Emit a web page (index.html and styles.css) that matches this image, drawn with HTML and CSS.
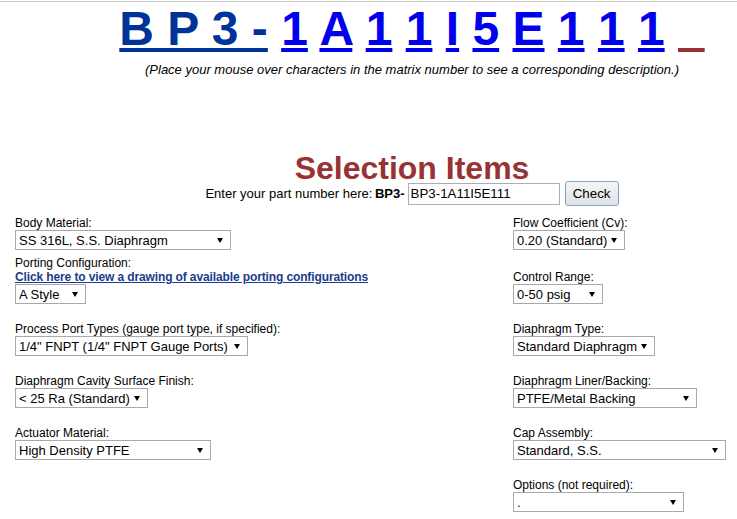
FILE: index.html
```html
<!DOCTYPE html>
<html>

<head>
    <title>
        Selection Items
    </title>

    <link rel="stylesheet" href="styles.css">
</head>

<body>
    <div class="topline"></div>

    <div class="page">
        <div class="head">
            <div class="matrix">
                <a class="prefix" href="#">B P 3 -</a>
                <a href="#">1</a>
                <a href="#">A</a>
                <a href="#">1</a>
                <a href="#">1</a>
                <a href="#">I</a>
                <a href="#">5</a>
                <a href="#">E</a>
                <a href="#">1</a>
                <a href="#">1</a>
                <a href="#">1</a>
                <span class="blank">&nbsp;&nbsp;</span>
            </div>

            <p class="hint">(Place your mouse over characters in the matrix number to see a corresponding description.)</p>

            <h1 class="title">Selection Items</h1>

            <form class="partline">
                <span>Enter your part number here: <b>BP3-</b></span>
                <input type="text" class="partno" value="BP3-1A11I5E111">
                <button type="button" class="check">Check</button>
            </form>
        </div>

        <div class="options">
            <div class="field">
                <label>Body Material:</label>
                <span class="pick"><select class="w-body"><option>SS 316L, S.S. Diaphragm</option></select></span>
            </div>
            <div class="field">
                <label>Flow Coefficient (Cv):</label>
                <span class="pick"><select class="w-flow"><option>0.20 (Standard)</option></select></span>
            </div>

            <div class="field">
                <label>Porting Configuration:</label>
                <a class="drawing" href="#">Click here to view a drawing of available porting configurations</a>
                <span class="pick"><select class="w-style"><option>A Style</option></select></span>
            </div>
            <div class="field">
                <label>Control Range:</label>
                <span class="pick"><select class="w-range"><option>0-50 psig</option></select></span>
            </div>

            <div class="field">
                <label>Process Port Types (gauge port type, if specified):</label>
                <span class="pick"><select class="w-port"><option>1/4" FNPT (1/4" FNPT Gauge Ports)</option></select></span>
            </div>
            <div class="field">
                <label>Diaphragm Type:</label>
                <span class="pick"><select class="w-dtype"><option>Standard Diaphragm</option></select></span>
            </div>

            <div class="field">
                <label>Diaphragm Cavity Surface Finish:</label>
                <span class="pick"><select class="w-finish"><option>&lt; 25 Ra (Standard)</option></select></span>
            </div>
            <div class="field">
                <label>Diaphragm Liner/Backing:</label>
                <span class="pick"><select class="w-liner"><option>PTFE/Metal Backing</option></select></span>
            </div>

            <div class="field">
                <label>Actuator Material:</label>
                <span class="pick"><select class="w-actuator"><option>High Density PTFE</option></select></span>
            </div>
            <div class="field">
                <label>Cap Assembly:</label>
                <span class="pick"><select class="w-cap"><option>Standard, S.S.</option></select></span>
            </div>

            <div class="field"></div>
            <div class="field">
                <label>Options (not required):</label>
                <span class="pick"><select class="w-extra"><option>.</option></select></span>
            </div>
        </div>
    </div>

</body>

</html>
```

FILE: styles.css
```css
body {
    margin: 0;
    background-color: white;
    font-family: "Liberation Sans", Arial, sans-serif;
    color: black;
}

.topline {
    margin-top: 1px;
    height: 1px;
    background-color: #cccccc;
}

.page {
    margin-left: 15px;
}

.head {
    padding-left: 72px;
}

.matrix {
    text-align: center;
    font-size: 48px;
    font-weight: bold;
    line-height: 53px;
    white-space: nowrap;
}

.matrix a {
    color: #0000ee;
    text-decoration: underline;
}

.matrix a.prefix {
    color: #003399;
}

.matrix .blank {
    text-decoration: underline;
    text-decoration-color: #993333;
}

.hint {
    margin: 7px 0 0 0;
    text-align: center;
    font-size: 13px;
    font-style: italic;
    line-height: 15px;
}

.title {
    margin: 79px 0 0 0;
    text-align: center;
    font-size: 32px;
    line-height: 25px;
    color: #993333;
}

.partline {
    display: flex;
    justify-content: center;
    align-items: center;
    gap: 5px;
    height: 25px;
    font-size: 13px;
}

.partline b {
    margin-left: -1px;
}

.partno {
    box-sizing: border-box;
    width: 152px;
    height: 22px;
    margin: 0 0 0 -2px;
    padding: 1px 2px;
    border: 1px solid #abadb3;
    font-family: "Liberation Sans", Arial, sans-serif;
    font-size: 13.33px;
}

.check {
    box-sizing: border-box;
    width: 54px;
    height: 25px;
    margin: 0;
    padding: 0;
    border: 1px solid #7aa7d8;
    border-radius: 3px;
    background: linear-gradient(#f6f6f6, #e0e0e0);
    font-family: "Liberation Sans", Arial, sans-serif;
    font-size: 13.33px;
    color: black;
}

.options {
    display: grid;
    grid-template-columns: 498px 1fr;
    grid-template-rows: 44px 54px 52px 52px 52px 52px;
}

.field {
    display: flex;
    flex-direction: column;
    justify-content: flex-end;
    align-items: flex-start;
}

.field label {
    font-size: 12px;
    line-height: 14px;
}

.drawing {
    font-size: 12px;
    line-height: 14px;
    font-weight: bold;
    letter-spacing: -0.12px;
    color: #1a3c8e;
}

.pick {
    position: relative;
    display: block;
}

.pick::after {
    content: "";
    position: absolute;
    right: 8px;
    top: 8px;
    border-left: 3px solid transparent;
    border-right: 3px solid transparent;
    border-top: 5px solid black;
    pointer-events: none;
}

.pick select {
    appearance: none;
    -webkit-appearance: none;
    box-sizing: border-box;
    display: block;
    height: 20px;
    margin: 0;
    padding: 0 0 0 3px;
    border: 1px solid #a9a9a9;
    border-radius: 0;
    background-color: white;
    font-family: "Liberation Sans", Arial, sans-serif;
    font-size: 13px;
    color: black;
}

.w-body { width: 216px; }
.w-style { width: 71px; }
.w-port { width: 233px; }
.w-finish { width: 133px; }
.w-actuator { width: 196px; }
.w-flow { width: 112px; }
.w-range { width: 90px; }
.w-dtype { width: 142px; }
.w-liner { width: 184px; }
.w-cap { width: 213px; }
.w-extra { width: 171px; }
```
